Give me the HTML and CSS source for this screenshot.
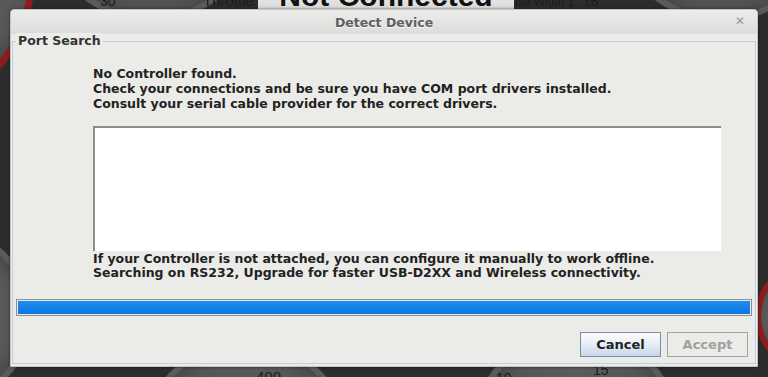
FILE: index.html
```html
<!DOCTYPE html>
<html>
<head>
<link rel="stylesheet" href="styles.css">
</head>
<body>

<!-- dashboard behind the dialog -->
<div class="dash">
  <div class="gauge gauge-tl"></div>
  <div class="gauge gauge-tm"></div>
  <div class="gauge gauge-tr"></div>
  <div class="gauge gauge-bl"></div>
  <div class="gauge gauge-bm"></div>
  <div class="gauge gauge-br"></div>
  <div class="gauge gauge-r"></div>
  <span class="dash-label lbl-30">30</span>
  <span class="dash-label lbl-throttle">Throttle</span>
  <div class="status-box">Not Connected</div>
  <span class="dash-label lbl-pw">lse Width 1</span>
  <span class="dash-label lbl-18">18</span>
  <span class="dash-label lbl-400">400</span>
  <span class="dash-label lbl-10">10</span>
  <span class="dash-label lbl-15">15</span>
</div>

<div class="dialog">
  <div class="titlebar">
    <span class="title">Detect Device</span>
    <span class="close">&#x2715;</span>
  </div>

  <div class="panel">
    <span class="legend">Port Search</span>

    <div class="msg">
      <div>No Controller found.</div>
      <div>Check your connections and be sure you have COM port drivers installed.</div>
      <div>Consult your serial cable provider for the correct drivers.</div>
    </div>

    <div class="log"></div>

    <div class="note">
      <div>If your Controller is not attached, you can configure it manually to work offline.</div>
      <div>Searching on RS232, Upgrade for faster USB-D2XX and Wireless connectivity.</div>
    </div>

    <div class="progress"><div class="fill"></div></div>

    <div class="buttons">
      <button class="btn btn-cancel">Cancel</button>
      <button class="btn btn-accept" disabled>Accept</button>
    </div>
  </div>
</div>

</body>
</html>
```

FILE: styles.css
```css
/* page + dashboard backdrop */
body {
  margin: 0;
  width: 768px;
  height: 377px;
  overflow: hidden;
  background: #2c2c2c;
  font-family: "DejaVu Sans", Verdana, sans-serif;
  position: relative;
}

.dash {
  position: absolute;
  left: 0;
  top: 0;
  width: 768px;
  height: 377px;
  overflow: hidden;
}

.gauge {
  position: absolute;
  border-radius: 50%;
  background: radial-gradient(circle, #6a6a6a 0%, #555 60%, #3e3e3e 80%, #2e2e2e 100%);
  border: 6px solid #5a5a5a;
}
.gauge-tl { left: -150px; top: -130px; width: 170px; height: 210px; border: 7px solid #8d1c1c; }
.gauge-tm { left: 40px; top: -200px; width: 210px; height: 210px; }
.gauge-tr { left: 610px; top: -200px; width: 210px; height: 210px; }
.gauge-bl { left: -130px; top: 230px; width: 150px; height: 160px; }
.gauge-bm { left: 140px; top: 340px; width: 200px; height: 200px; }
.gauge-br { left: 470px; top: 330px; width: 200px; height: 200px; }
.gauge-r { left: 755px; top: 270px; width: 60px; height: 80px; border: 6px solid #8d1c1c; }

.dash-label {
  position: absolute;
  font-family: "Liberation Sans", Arial, sans-serif;
  font-size: 14px;
  color: #1c1c1c;
}
.lbl-30 { left: 100px; top: -7px; }
.lbl-throttle { left: 203px; top: -8px; font-size: 15px; }
.lbl-pw { left: 515px; top: -5px; font-size: 12px; }
.lbl-18 { left: 583px; top: -7px; }
.lbl-400 { left: 256px; top: 368px; font-size: 15px; }
.lbl-10 { left: 496px; top: 370px; }
.lbl-15 { left: 593px; top: 362px; }

.status-box {
  position: absolute;
  left: 258px;
  top: -14px;
  width: 256px;
  height: 24px;
  background: linear-gradient(#f4f4f4, #d8d8d8);
  font-family: "Liberation Sans", Arial, sans-serif;
  font-weight: bold;
  font-size: 30px;
  line-height: 20px;
  text-align: center;
  color: #111;
  overflow: hidden;
}

/* the dialog window */
.dialog {
  position: absolute;
  left: 10px;
  top: 9px;
  width: 746px;
  height: 356px;
  background: #ebece8;
  border: 1px solid #c4c4c2;
  border-radius: 4px 4px 0 0;
  box-shadow: 0 0 3px rgba(0, 0, 0, 0.5);
  display: flex;
  flex-direction: column;
}

.titlebar {
  height: 24px;
  flex: none;
  display: flex;
  align-items: center;
  justify-content: center;
  background: linear-gradient(#ececea, #dcdcda);
  border-radius: 4px 4px 0 0;
  position: relative;
}

.title {
  font-weight: bold;
  font-size: 12.5px;
  color: #5e5e5e;
  text-shadow: 0 1px 0 #fafafa;
}

.close {
  position: absolute;
  right: 12px;
  top: 4px;
  font-size: 12px;
  font-weight: bold;
  color: #9a9a9a;
}

/* titled border panel */
.panel {
  position: relative;
  margin: 7px 1px 0 1px;
  height: 321px;
  border: 1px solid #b9d0e6;
  padding: 0 2px;
  font-size: 12.5px;
  font-weight: bold;
  color: #222;
}

.legend {
  position: absolute;
  left: 3px;
  top: -9px;
  padding: 0 2px;
  background: #ebece8;
  font-size: 12.5px;
  line-height: 16px;
  color: #333;
}

.msg {
  margin: 24px 0 0 78px;
  line-height: 15px;
}

.log {
  margin: 15px 0 0 78px;
  width: 626px;
  height: 123px;
  background: #fff;
  border-top: 2px solid #8c8c8c;
  border-left: 2px solid #8c8c8c;
}

.note {
  margin: 1px 0 0 78px;
  line-height: 14px;
}

.progress {
  margin: 19px 1px 0 1px;
  height: 13px;
  border: 1px solid #8e8e8e;
  padding: 1px;
}
.fill {
  height: 100%;
  background: linear-gradient(#1e8ef2, #0a78e0);
}

.buttons {
  display: flex;
  justify-content: flex-end;
  gap: 6px;
  margin: 16px 5px 0 0;
}

.btn {
  width: 81px;
  height: 25px;
  font-family: "DejaVu Sans", Verdana, sans-serif;
  font-weight: bold;
  font-size: 13px;
  padding: 0;
}
.btn-cancel {
  color: #222;
  background: linear-gradient(#fbfcfd, #e6edf5 50%, #c7d6e8);
  border: 1px solid #7b8aa6;
}
.btn-accept {
  color: #a0a0a0;
  background: #ebece8;
  border: 1px solid #a3a3a3;
}
```
